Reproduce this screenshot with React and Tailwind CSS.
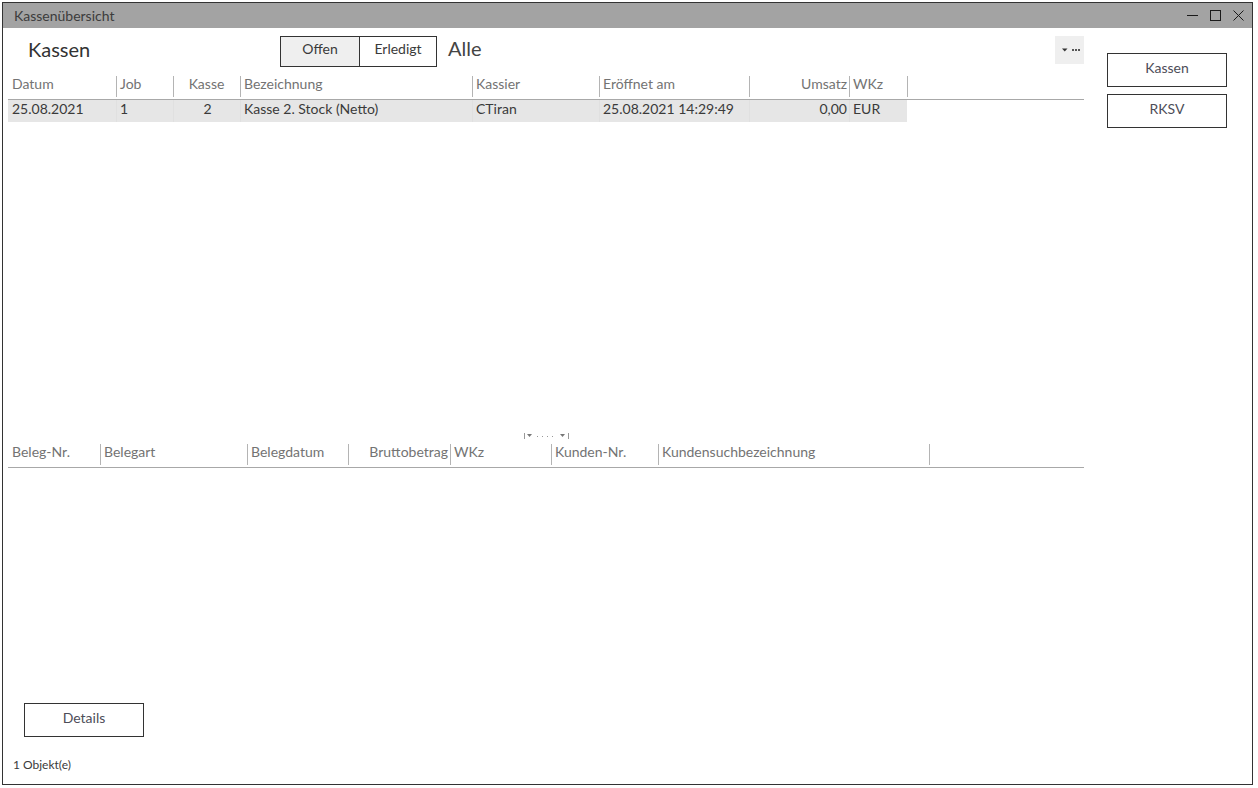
import React from "react";

const topCols = [
  { label: "Datum", w: 108, align: "left", val: "25.08.2021", first: true },
  { label: "Job", w: 57, align: "left", val: "1" },
  { label: "Kasse", w: 67, align: "center", val: "2" },
  { label: "Bezeichnung", w: 232, align: "left", val: "Kasse 2. Stock (Netto)" },
  { label: "Kassier", w: 127, align: "left", val: "CTiran" },
  { label: "Eröffnet am", w: 150, align: "left", val: "25.08.2021 14:29:49" },
  { label: "Umsatz", w: 100, align: "right", val: "0,00" },
  { label: "WKz", w: 58, align: "left", val: "EUR" },
];

const bottomCols = [
  { label: "Beleg-Nr.", w: 92, align: "left", first: true },
  { label: "Belegart", w: 147, align: "left" },
  { label: "Belegdatum", w: 101, align: "left" },
  { label: "Bruttobetrag", w: 102, align: "right" },
  { label: "WKz", w: 101, align: "left" },
  { label: "Kunden-Nr.", w: 107, align: "left" },
  { label: "Kundensuchbezeichnung", w: 271, align: "left" },
];

function HeaderCell({ c }) {
  const alignCls =
    c.align === "right"
      ? "justify-end pr-[2px]"
      : c.align === "center"
      ? "justify-center"
      : "justify-start pl-[4px]";
  return (
    <div className="relative flex h-full items-center shrink-0 pb-[6px]" style={{ width: c.w }}>
      {!c.first && <div className="absolute left-0 top-[1px] bottom-[2px] w-px bg-[#b4b4b4]" />}
      <div className={"flex w-full " + alignCls}>
        <span className="text-[14px] text-[#737373] leading-none whitespace-nowrap">{c.label}</span>
      </div>
    </div>
  );
}

function DataCell({ c }) {
  const alignCls =
    c.align === "right"
      ? "justify-end pr-[2px]"
      : c.align === "center"
      ? "justify-center pl-[2px]"
      : "justify-start pl-[4px]";
  return (
    <div className="relative flex h-full items-center shrink-0 pb-[4px]" style={{ width: c.w }}>
      {!c.first && <div className="absolute left-0 top-0 bottom-0 w-px bg-[#e0e0e0]" />}
      <div className={"flex w-full " + alignCls}>
        <span className="text-[14px] text-[#3a3a3a] leading-none whitespace-nowrap">{c.val}</span>
      </div>
    </div>
  );
}

function Btn({ children, className = "" }) {
  return (
    <div
      className={
        "flex h-[34px] w-[120px] items-center justify-center border border-[#333333] bg-white pb-[5px] text-[14px] leading-none text-[#4d4d58] " +
        className
      }
    >
      {children}
    </div>
  );
}

export default function App() {
  return (
    <div className="h-[788px] w-[1258px] bg-white p-[2px] font-['Lato',sans-serif]">
      <div className="flex h-[783px] w-[1251px] flex-col border border-[#333333] bg-white">
        {/* Title bar */}
        <div className="flex h-[25px] shrink-0 items-center bg-[#a3a3a3] pb-[1px] pl-[11px]">
          <span className="text-[14px] text-[#3c3c3c]">Kassenübersicht</span>
          <div className="ml-auto flex items-center gap-[12px] pr-[8px]">
            <svg width="11" height="11" viewBox="0 0 11 11">
              <line x1="0" y1="5.5" x2="11" y2="5.5" stroke="#1a1a1a" strokeWidth="1" />
            </svg>
            <svg width="11" height="11" viewBox="0 0 11 11">
              <rect x="0.5" y="0.5" width="10" height="10" fill="none" stroke="#1a1a1a" strokeWidth="1" />
            </svg>
            <svg width="11" height="11" viewBox="0 0 11 11">
              <path d="M0.5 0.5 L10.5 10.5 M10.5 0.5 L0.5 10.5" stroke="#1a1a1a" strokeWidth="1" />
            </svg>
          </div>
        </div>

        {/* Body */}
        <div className="flex flex-1">
          {/* Left column */}
          <div className="ml-[5px] flex w-[1076px] flex-col">
            {/* Heading row */}
            <div className="flex h-[47px] shrink-0 items-start">
              <div className="ml-[20px] w-[252px] pt-[9px] text-[20px] leading-[24px] text-[#333333]">Kassen</div>
              <div className="mt-[8px] flex h-[31px] border border-[#333333] text-[14px] leading-none text-[#3a3a3a]">
                <div className="flex w-[78px] items-center justify-center bg-[#efefef] pb-[5px]">Offen</div>
                <div className="w-px bg-[#333333]" />
                <div className="flex w-[76px] items-center justify-center bg-white pb-[5px]">Erledigt</div>
              </div>
              <div className="ml-[11px] pt-[8px] text-[20px] leading-[24px] text-[#444444]">Alle</div>
              <div className="ml-auto mt-[8px] flex h-[28px] w-[29px] items-center justify-center bg-[#efefef]">
                <svg width="22" height="6" viewBox="0 0 22 6">
                  <path d="M3 1.5 L8.5 1.5 L5.75 4.5 Z" fill="#333" />
                  <rect x="13" y="2" width="2" height="2" fill="#555" />
                  <rect x="16" y="2" width="2" height="2" fill="#555" />
                  <rect x="19" y="2" width="2" height="2" fill="#555" />
                </svg>
              </div>
            </div>

            {/* Top table header */}
            <div className="flex h-[25px] shrink-0 border-b border-[#a8a8a8]">
              {topCols.map((c) => (
                <HeaderCell key={c.label} c={c} />
              ))}
              <HeaderCell c={{ label: "", w: 20, align: "left" }} />
            </div>
            {/* Data row */}
            <div className="flex h-[22px] w-[899px] shrink-0 bg-[#e6e6e6]">
              {topCols.map((c) => (
                <DataCell key={c.label} c={c} />
              ))}
            </div>

            {/* Space of upper grid */}
            <div className="h-[311px] shrink-0" />

            {/* Splitter indicator */}
            <div className="flex h-[6px] shrink-0 pl-[516px]">
              <svg width="46" height="6" viewBox="0 0 46 6">
                <rect x="0" y="0" width="1" height="6" fill="#999" />
                <path d="M3 1 L8 1 L5.5 4 Z" fill="#777" />
                <rect x="13" y="3" width="1" height="1" fill="#999" />
                <rect x="18" y="3" width="1" height="1" fill="#999" />
                <rect x="23" y="3" width="1" height="1" fill="#999" />
                <rect x="28" y="3" width="1" height="1" fill="#999" />
                <path d="M36 1 L41 1 L38.5 4 Z" fill="#777" />
                <rect x="44" y="0" width="1" height="6" fill="#999" />
              </svg>
            </div>
            <div className="h-[4px] shrink-0" />

            {/* Bottom table header */}
            <div className="flex h-[25px] shrink-0 border-b border-[#a8a8a8]">
              {bottomCols.map((c) => (
                <HeaderCell key={c.label} c={c} />
              ))}
              <HeaderCell c={{ label: "", w: 20, align: "left" }} />
            </div>

            <div className="h-[235px] shrink-0" />

            <Btn className="ml-[16px]">Details</Btn>

            <div className="ml-[5px] mt-[20px] text-[12px] leading-[16px] text-[#3a3a3a]">1 Objekt(e)</div>
          </div>

          {/* Right column */}
          <div className="ml-[23px] mt-[25px] flex flex-col gap-[7px]">
            <Btn>Kassen</Btn>
            <Btn>RKSV</Btn>
          </div>
        </div>
      </div>
    </div>
  );
}
